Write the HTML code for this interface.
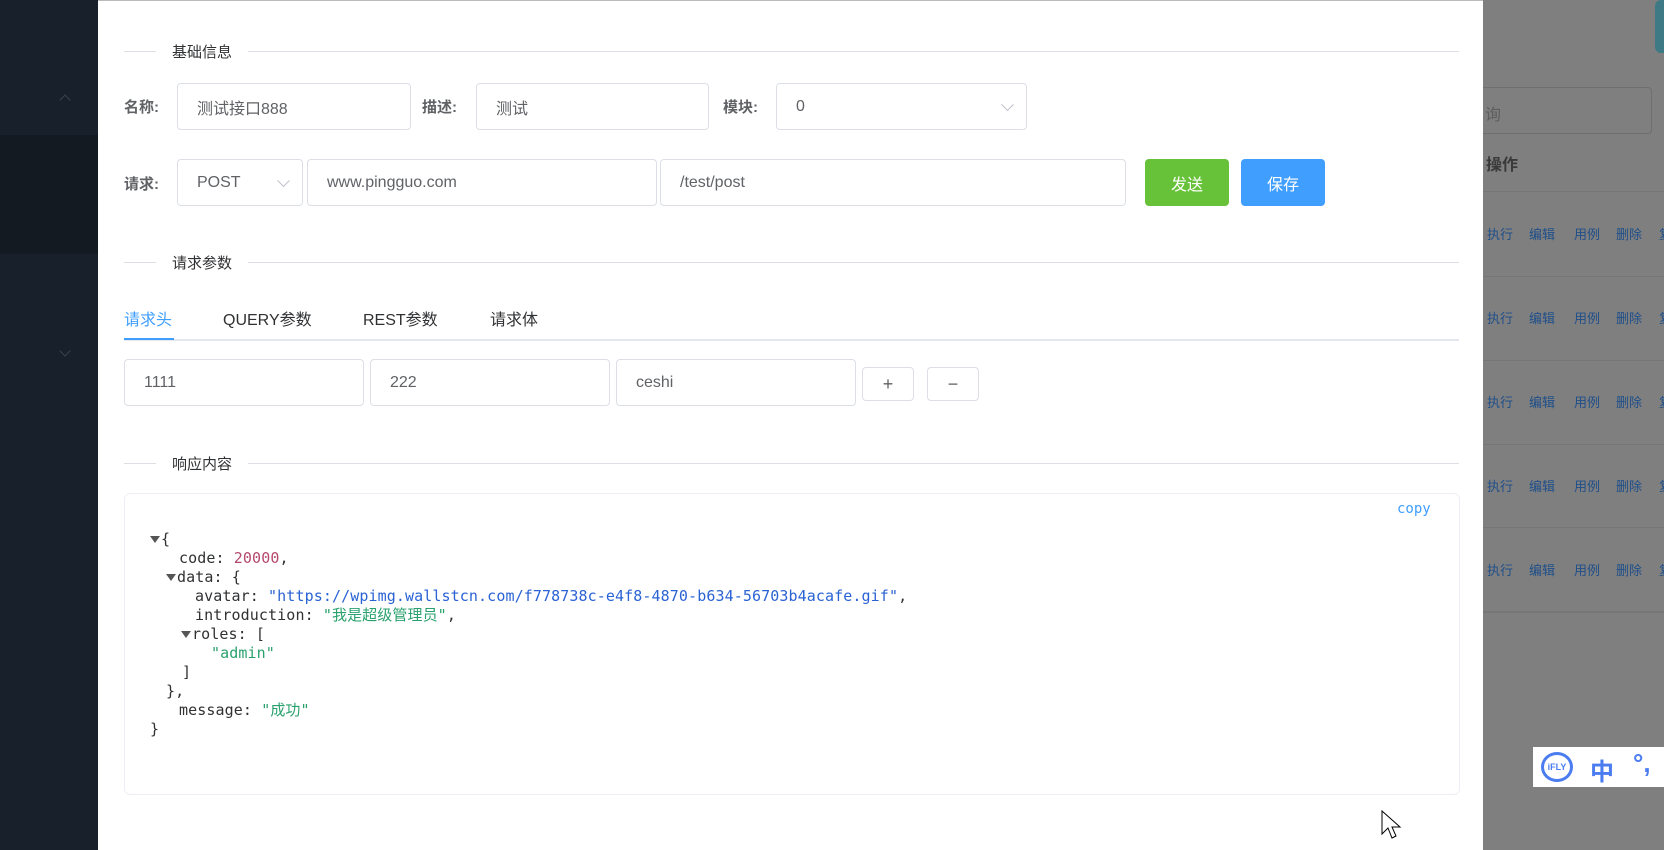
<!DOCTYPE html>
<html><head><meta charset="utf-8"><style>
*{box-sizing:border-box;margin:0;padding:0}
body{width:1664px;height:850px;overflow:hidden;position:relative;background:#7f7f7f;font-family:"Liberation Sans","Noto Sans CJK SC",sans-serif;color:#606266}
.abs{position:absolute}
.side{left:0;top:0;width:99px;height:850px;background:#18202b}
.modal{left:98px;top:0;width:1385px;height:850px;background:#fff;border-top:1px solid #bbb}
.div{position:absolute;height:1px;background:#dcdfe6;left:124px;width:1335px}
.dt{position:absolute;background:#fff;padding:0 16px;font-size:15px;color:#303133;left:156px}
.lbl{position:absolute;font-size:15px;font-weight:bold;color:#606266}
.inp{position:absolute;border:1px solid #dcdfe6;border-radius:4px;font-size:16px;color:#606266;padding-left:19px;display:flex;align-items:center;background:#fff}
.chev{position:absolute;right:14px;top:50%;width:9px;height:9px;border-right:1.5px solid #c0c4cc;border-bottom:1.5px solid #c0c4cc;transform:translateY(-75%) rotate(45deg)}
.btn{position:absolute;border-radius:4px;color:#fff;font-size:16px;display:flex;align-items:center;justify-content:center}
.tab{position:absolute;top:306px;font-size:16px;color:#303133}
.js{position:absolute;left:0;top:530px;font-family:"DejaVu Sans Mono","Noto Sans CJK SC",monospace;font-size:15px;line-height:19px;color:#303133;letter-spacing:0.1px}
.js div{white-space:pre;height:19px}
.n{color:#b5496c}.s{color:#2aa16d}.u{color:#2a63d4}
.tri{display:inline-block;width:0;height:0;border-left:5px solid transparent;border-right:5px solid transparent;border-top:7px solid #555;margin-right:1px;vertical-align:1px}
.act{position:absolute;font-size:13px;color:#1f4f8a}
.hl{position:absolute;left:1483px;width:181px;height:1px;background:#767676}
</style></head><body>
<div class="abs side"></div>
<div class="abs" style="left:0;top:135px;width:99px;height:119px;background:#131a22"></div>
<div class="abs" style="left:61px;top:96px;width:8px;height:8px;border-left:1.5px solid #3a4350;border-top:1.5px solid #3a4350;transform:rotate(45deg)"></div>
<div class="abs" style="left:61px;top:347px;width:8px;height:8px;border-right:1.5px solid #3a4350;border-bottom:1.5px solid #3a4350;transform:rotate(45deg)"></div>

<div class="abs" style="left:1655px;top:0;width:20px;height:53px;background:#3e7a86;border-radius:6px"></div>
<div class="abs" style="left:1470px;top:87px;width:182px;height:47px;border:1px solid #6f6f6f;border-radius:4px;font-size:16px;color:#5e5e5e;padding:13px 0 0 14px">询</div>
<div class="abs" style="left:1486px;top:151px;font-size:16px;font-weight:bold;color:#3a3a3a">操作</div>
<div class="hl" style="top:191px"></div><div class="hl" style="top:276px"></div><div class="hl" style="top:360px"></div><div class="hl" style="top:444px"></div><div class="hl" style="top:527px"></div><div class="hl" style="top:611px;height:2px"></div>
<div id="acts"></div>
<div class="abs" style="left:1533px;top:747px;width:131px;height:40px;background:#fff"></div>
<div class="abs" style="left:1541px;top:752px;width:32px;height:30px;border:3px solid #4b7cf0;border-radius:50%;font-size:9px;font-weight:bold;color:#4b7cf0;text-align:center;line-height:24px">iFLY</div>
<div class="abs" style="left:1590px;top:752px;font-size:24px;font-weight:bold;color:#4b7cf0">中</div>
<div class="abs" style="left:1633px;top:748px;font-size:26px;font-weight:bold;color:#4b7cf0">°,</div>

<div class="abs modal"></div>
<div class="div" style="top:51px"></div><div class="dt" style="top:41px">基础信息</div>
<div class="lbl" style="left:124px;top:96px">名称:</div>
<div class="inp" style="left:177px;top:83px;width:234px;height:47px">测试接口888</div>
<div class="lbl" style="left:422px;top:96px">描述:</div>
<div class="inp" style="left:476px;top:83px;width:233px;height:47px">测试</div>
<div class="lbl" style="left:723px;top:96px">模块:</div>
<div class="inp" style="left:776px;top:83px;width:251px;height:47px">0<span class="chev"></span></div>
<div class="lbl" style="left:124px;top:173px">请求:</div>
<div class="inp" style="left:177px;top:159px;width:126px;height:47px">POST<span class="chev"></span></div>
<div class="inp" style="left:307px;top:159px;width:350px;height:47px">www.pingguo.com</div>
<div class="inp" style="left:660px;top:159px;width:466px;height:47px">/test/post</div>
<div class="btn" style="left:1145px;top:159px;width:84px;height:47px;background:#67c23a">发送</div>
<div class="btn" style="left:1241px;top:159px;width:84px;height:47px;background:#409eff">保存</div>

<div class="div" style="top:262px"></div><div class="dt" style="top:252px">请求参数</div>
<div class="tab" style="left:124px;color:#409eff">请求头</div>
<div class="tab" style="left:223px">QUERY参数</div>
<div class="tab" style="left:363px">REST参数</div>
<div class="tab" style="left:490px">请求体</div>
<div class="abs" style="left:124px;top:339px;width:1335px;height:2px;background:#e4e7ed"></div>
<div class="abs" style="left:124px;top:338px;width:50px;height:2px;background:#409eff"></div>
<div class="inp" style="left:124px;top:359px;width:240px;height:47px">1111</div>
<div class="inp" style="left:370px;top:359px;width:240px;height:47px">222</div>
<div class="inp" style="left:616px;top:359px;width:240px;height:47px">ceshi</div>
<div class="inp" style="left:862px;top:367px;width:52px;height:34px;padding:0;justify-content:center;font-size:18px">+</div>
<div class="inp" style="left:927px;top:367px;width:52px;height:34px;padding:0;justify-content:center;font-size:18px">−</div>

<div class="div" style="top:463px"></div><div class="dt" style="top:453px">响应内容</div>
<div class="abs" style="left:124px;top:493px;width:1336px;height:302px;border:1px solid #ebeef5;border-radius:6px"></div>
<div class="abs" style="left:1397px;top:501px;font-family:'DejaVu Sans Mono',monospace;font-size:14px;color:#409eff">copy</div>
<div class="js">
<div style="padding-left:150px"><span class="tri"></span>{</div>
<div style="padding-left:179px">code: <span class="n">20000</span>,</div>
<div style="padding-left:166px"><span class="tri"></span>data: {</div>
<div style="padding-left:195px">avatar: <span class="u">"https://wpimg.wallstcn.com/f778738c-e4f8-4870-b634-56703b4acafe.gif"</span>,</div>
<div style="padding-left:195px">introduction: <span class="s">"我是超级管理员"</span>,</div>
<div style="padding-left:181px"><span class="tri"></span>roles: [</div>
<div style="padding-left:211px"><span class="s">"admin"</span></div>
<div style="padding-left:182px">]</div>
<div style="padding-left:166px">},</div>
<div style="padding-left:179px">message: <span class="s">"成功"</span></div>
<div style="padding-left:150px">}</div>
</div>
<svg class="abs" style="left:1381px;top:810px" width="22" height="30" viewBox="0 0 22 30"><path d="M1 1 L1 24 L7 18 L11 28 L15 26 L11 17 L19 17 Z" fill="#fff" stroke="#000" stroke-width="1"/></svg>
<script>
var h='';[232,316,400,484,568].forEach(function(y){[['执行',1487],['编辑',1529],['用例',1574],['删除',1616],['复',1659]].forEach(function(a){h+='<div class="act" style="left:'+a[1]+'px;top:'+(y-8)+'px">'+a[0]+'</div>'})});document.getElementById('acts').innerHTML=h;
</script>
</body></html>
